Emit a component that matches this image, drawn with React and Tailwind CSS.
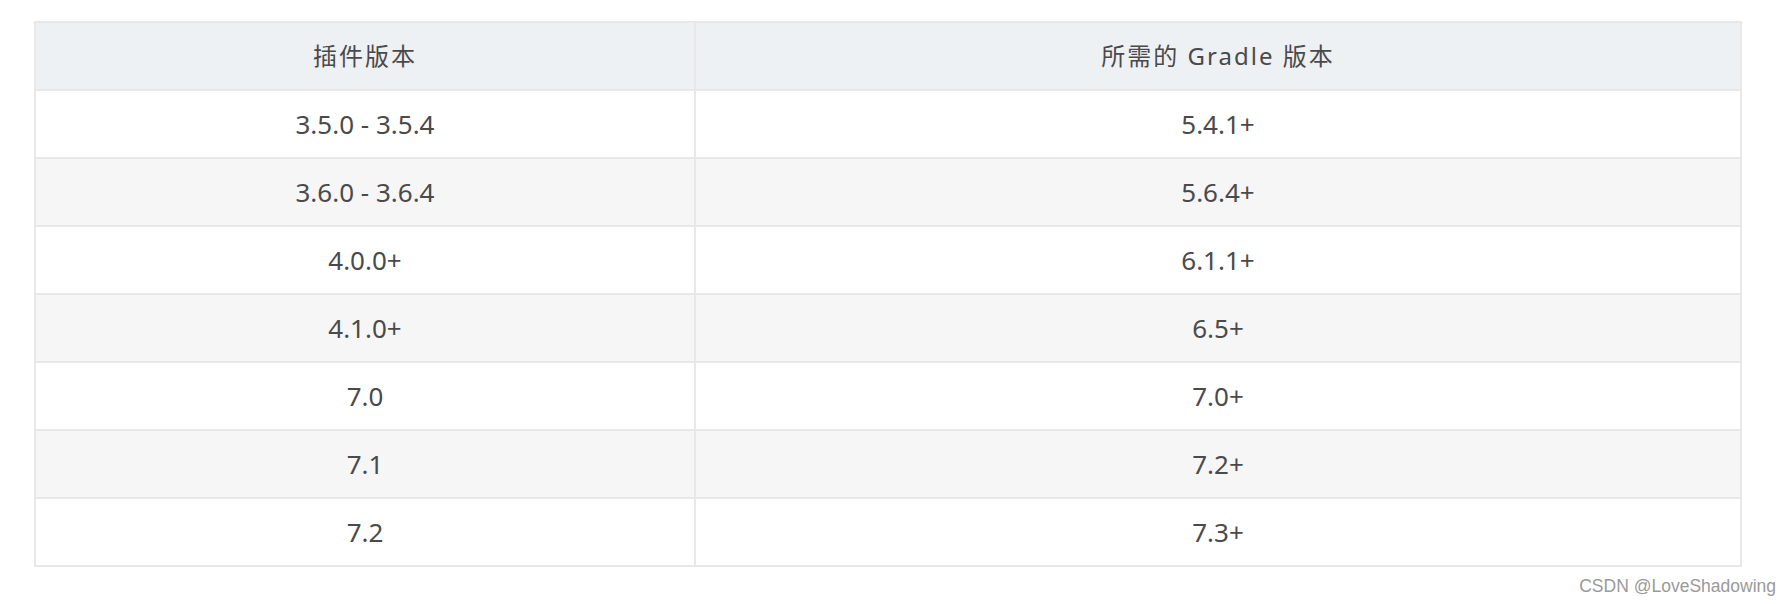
import React from "react";

const rows = [
  ["3.5.0 - 3.5.4", "5.4.1+"],
  ["3.6.0 - 3.6.4", "5.6.4+"],
  ["4.0.0+", "6.1.1+"],
  ["4.1.0+", "6.5+"],
  ["7.0", "7.0+"],
  ["7.1", "7.2+"],
  ["7.2", "7.3+"],
];

const font = { fontFamily: '"Noto Sans", "Noto Sans CJK SC", sans-serif' };

export default function App() {
  return (
    <div className="w-[1792px] h-[604px] bg-white relative" style={font}>
      <div className="pt-[21px] pl-[34px]">
        <div className="w-[1708px] border-2 border-[#e8e8e8] text-[#4a4a4a]">
          <div className="grid grid-cols-[660px_1fr] h-[68px] bg-[#eef1f4] border-b-2 border-[#e8e8e8]">
            <div className="flex items-center justify-center border-r-2 border-[#e8e8e8] text-[24px] tracking-[2px]">
              插件版本
            </div>
            <div className="flex items-center justify-center text-[24px] tracking-[2px]">
              所需的 Gradle 版本
            </div>
          </div>
          {rows.map((r, i) => (
            <div
              key={i}
              className={
                "grid grid-cols-[660px_1fr] " +
                (i === rows.length - 1 ? "h-[66px] " : "h-[68px] border-b-2 border-[#e8e8e8] ") +
                (i % 2 === 1 ? "bg-[#f6f6f6]" : "bg-white")
              }
            >
              <div className="flex items-center justify-center border-r-2 border-[#e8e8e8] text-[26px]">
                {r[0]}
              </div>
              <div className="flex items-center justify-center text-[26px]">{r[1]}</div>
            </div>
          ))}
        </div>
      </div>
      <div
        className="absolute right-[16px] bottom-[5px] text-[17.5px] text-[#9a9a9a]"
        style={{ fontFamily: '"Liberation Sans", sans-serif' }}
      >
        CSDN @LoveShadowing
      </div>
    </div>
  );
}
